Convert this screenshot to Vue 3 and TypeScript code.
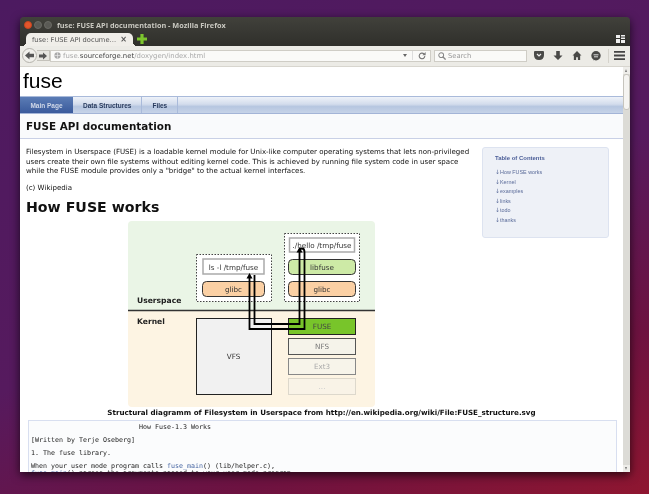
<script setup lang="ts">
const tocItems = ['How FUSE works', 'Kernel', 'examples', 'links', 'todo', 'thanks']
const navItems = ['Main Page', 'Data Structures', 'Files']
const lanes = [
  { y: 318, label: 'FUSE', fill: '#78c52a', stroke: '#222', text: '#444' },
  { y: 338, label: 'NFS', fill: '#f5f3ea', stroke: '#555', text: '#777' },
  { y: 358, label: 'Ext3', fill: '#f7f4ea', stroke: '#888', text: '#aaa' },
  { y: 378, label: '...', fill: '#f9f3e7', stroke: '#ddd8cc', text: '#ccc' },
]
const howto = [
  ' '.repeat(27) + 'How Fuse-1.3 Works',
  '',
  '[Written by Terje Oseberg]',
  '',
  '1. The fuse library.',
  '',
  '',
].join('\n')
</script>

<template>
  <div class="desktop">
    <div class="window">
      <header class="chrome">
        <div class="titlebar">
          <div class="lights">
            <span class="light close"></span>
            <span class="light"></span>
            <span class="light"></span>
          </div>
          <span class="wintitle">fuse: FUSE API documentation - Mozilla Firefox</span>
        </div>
        <div class="tabstrip">
          <div class="tab">
            <span class="tabtext">fuse: FUSE API docume…</span>
            <span class="tabclose">×</span>
          </div>
          <svg class="plus" width="10" height="10" viewBox="0 0 10 10">
            <path d="M3.4 0h3.2v3.4H10v3.2H6.6V10H3.4V6.6H0V3.4h3.4z" fill="#7cc52e" />
          </svg>
          <span class="spacer"></span>
          <svg class="grid" width="9" height="8" viewBox="0 0 9 8">
            <path d="M0 0h4v3H0zM5 0h4v1.5H5zM5 2.5h4V4H5zM0 4h4v4H0zM5 5h4v3H5z" fill="#eee" />
          </svg>
        </div>
      </header>

      <div class="toolbar">
        <div class="navbtns">
          <span class="back">
            <svg width="9" height="9" viewBox="0 0 10 10"><path d="M0 5l5-4.5V3h5v4H5v2.500z" fill="#555" /></svg>
          </span>
          <span class="forward">
            <svg width="8" height="8" viewBox="0 0 10 10"><path d="M10 5L5 .5V3H0v4h5v2.500z" fill="#555" /></svg>
          </span>
        </div>
        <div class="urlbar">
          <svg width="7" height="7" viewBox="0 0 8 8"><circle cx="4" cy="4" r="3.600" fill="#aaa" /><path d="M.5 4h7M4 .5v7" stroke="#eee" stroke-width=".7" /></svg>
          <span class="url">fuse.<b>sourceforge.net</b>/doxygen/index.html</span>
          <span class="spacer"></span>
          <span class="drop"></span>
          <span class="urlsep"></span>
          <svg width="8" height="8" viewBox="0 0 10 10"><path d="M8.500 5a3.500 3.500 0 1 1-1-2.500" fill="none" stroke="#777" stroke-width="1.400" /><path d="M9.500 0v4h-4z" fill="#777" /></svg>
        </div>
        <div class="searchbar">
          <svg width="8" height="8" viewBox="0 0 10 10"><circle cx="4" cy="4" r="3" fill="none" stroke="#888" stroke-width="1.300" /><path d="M6 6l3.500 3.500" stroke="#888" stroke-width="1.600" /></svg>
          <span>Search</span>
        </div>
        <div class="tools">
          <svg width="10" height="9" viewBox="0 0 10 9"><path d="M0 1q0-1 1-1h8q1 0 1 1v3q0 5-5 5T0 4z" fill="#4a4a48" /><path d="M3 3l2 2 2-2" fill="none" stroke="#eee" stroke-width="1.200" /></svg>
          <svg width="10" height="9" viewBox="0 0 10 10"><path d="M3 0h4v5h3l-5 5-5-5h3z" fill="#4a4a48" /></svg>
          <svg width="10" height="9" viewBox="0 0 10 10"><path d="M5 0l5 5H8.500v5H6V7H4v3H1.500V5H0z" fill="#4a4a48" /></svg>
          <svg width="10" height="10" viewBox="0 0 10 10"><circle cx="5" cy="4.700" r="4.700" fill="#4a4a48" /><path d="M2.500 9.500L3 7l2 1z" fill="#4a4a48" /><path d="M2.500 3.800h5M3 5.800h4" stroke="#eee" stroke-width=".9" /></svg>
          <span class="toolsep"></span>
          <svg class="menu" width="11" height="9" viewBox="0 0 11 9"><path d="M0 0h11v1.800H0zM0 3.600h11v1.800H0zM0 7.200h11V9H0z" fill="#444" /></svg>
        </div>
      </div>

      <div class="viewport">
        <main class="page">
          <div class="projectname">fuse</div>
          <nav class="navtabs">
            <a v-for="(item, i) in navItems" :key="item" class="navtab" :class="{ active: i === 0 }">{{ item }}</a>
          </nav>
          <div class="pagehead">FUSE API documentation</div>

          <div class="contents">
            <aside class="toc">
              <h4>Table of Contents</h4>
              <ul>
                <li v-for="item in tocItems" :key="item"><span class="arr">↓</span>{{ item }}</li>
              </ul>
            </aside>
            <p class="intro">Filesystem in Userspace (FUSE) is a loadable kernel module for Unix-like computer operating systems that lets non-privileged users create their own file systems without editing kernel code. This is achieved by running file system code in user space while the FUSE module provides only a "bridge" to the actual kernel interfaces.</p>
            <p class="cite">(c) Wikipedia</p>
            <h1>How FUSE works</h1>

            <svg class="diagram" width="247" height="186" viewBox="128 221 247 186">
              <path d="M128 311v-86q0-4 4-4h239q4 0 4 4v86z" fill="#eaf5e6" />
              <path d="M128 311h247v92q0 4-4 4H132q-4 0-4-4z" fill="#fdf4e3" />
              <line x1="128" y1="310.500" x2="375" y2="310.500" stroke="#333" stroke-width="1.500" />

              <rect x="196.500" y="254.500" width="75" height="47" fill="#fff" stroke="#444" stroke-dasharray="1.500 1.500" />
              <rect x="203" y="259" width="61" height="15" fill="#fff" stroke="#aaa" stroke-width="1.500" />
              <rect x="202.500" y="281.500" width="62" height="15" rx="4" fill="#fbd0a4" stroke="#333" />

              <rect x="284.500" y="233.500" width="75" height="68" fill="#fff" stroke="#444" stroke-dasharray="1.500 1.500" />
              <rect x="289.500" y="238" width="65" height="14" fill="#fff" stroke="#aaa" stroke-width="1.500" />
              <rect x="288.500" y="259.500" width="67" height="15" rx="4" fill="#cdeaa6" stroke="#333" />
              <rect x="288.500" y="281.500" width="67" height="15" rx="4" fill="#fbd0a4" stroke="#333" />

              <rect x="196.500" y="318.500" width="75" height="76" fill="#f1f1f1" stroke="#222" />
              <rect v-for="lane in lanes" :key="lane.label" x="288.500" :y="lane.y + 0.500" width="67" height="16" :fill="lane.fill" :stroke="lane.stroke" />

              <g class="dtext" fill="#333">
                <text x="233.500" y="269.500">ls -l /tmp/fuse</text>
                <text x="233.500" y="291.500">glibc</text>
                <text x="322" y="248">./hello /tmp/fuse</text>
                <text x="322" y="269.500">libfuse</text>
                <text x="322" y="291.500">glibc</text>
                <text x="233.500" y="359">VFS</text>
                <text v-for="lane in lanes" :key="lane.label" x="322" :y="lane.y + 11" :fill="lane.text">{{ lane.label }}</text>
              </g>
              <text class="zone" x="137" y="303">Userspace</text>
              <text class="zone" x="137" y="324">Kernel</text>

              <g fill="none" stroke="#000" stroke-width="1.800">
                <path d="M254.500 275V324H299.500V252" />
                <path d="M249.500 278V329H304.500V252q0-3.500-2.500-3.500-2.500 0-2.500 2.500" />
              </g>
              <path d="M249.500 273l-3 5.500h6zM299.500 247l-3 5.500h6z" fill="#000" />
            </svg>

            <p class="caption">Structural diagramm of Filesystem in Userspace from http://en.wikipedia.org/wiki/File:FUSE_structure.svg</p>

            <div class="fragment">
              <div>{{ howto }}</div>
              <div>When your user mode program calls <a>fuse_main</a>() (lib/helper.c),</div>
              <div><a>fuse_main</a>() parses the arguments passed to your user mode program,</div>
            </div>
          </div>
        </main>
        <div class="scrollbar">
          <span class="sbtn up"></span>
          <span class="thumb"></span>
          <span class="spacer"></span>
          <span class="sbtn down"></span>
        </div>
      </div>
    </div>
  </div>
</template>

<style>
html, body { margin: 0; overflow: hidden; }
</style>

<style scoped>
.desktop {
  width: 649px;
  height: 494px;
  box-sizing: border-box;
  padding: 17px 19px 22px 20px;
  overflow: hidden;
  background: linear-gradient(158deg, #4c1a60 0%, #561a5e 52%, #6d1240 78%, #8f1630 100%);
  filter: blur(0.35px);
}
.window {
  height: 455px;
  display: flex;
  flex-direction: column;
  border-radius: 4px 4px 0 0;
  overflow: hidden;
  box-shadow: 0 3px 10px rgba(0, 0, 0, 0.7);
  font-family: "DejaVu Sans", sans-serif;
}
.spacer { flex: 1 1 auto; }

.chrome {
  height: 29px;
  flex: none;
  background: linear-gradient(#41413b, #2f2f2b);
  display: flex;
  flex-direction: column;
}
.titlebar {
  height: 16px;
  flex: none;
  display: flex;
  align-items: center;
  padding-left: 4px;
}
.lights { display: flex; gap: 2px; width: 33px; }
.light {
  width: 8px;
  height: 8px;
  border-radius: 50%;
  background: #5a5a55;
  border: 0.5px solid #6a6a64;
  box-sizing: border-box;
}
.light.close { background: #e2562c; border-color: #c8451f; }
.wintitle {
  font-family: "Open Sans", sans-serif;
  font-size: 7.300px;
  font-weight: bold;
  color: #c9c8c0;
  white-space: nowrap;
}
.tabstrip {
  height: 13px;
  flex: none;
  display: flex;
  align-items: center;
  padding-left: 6px;
  padding-right: 5px;
}
.tab {
  width: 107px;
  height: 13px;
  box-sizing: border-box;
  background: #f0eee9;
  border-radius: 5px 5px 0 0;
  display: flex;
  align-items: center;
  justify-content: space-between;
  padding: 0 6px 0 6px;
  position: relative;
}
.tab::before,
.tab::after {
  content: "";
  position: absolute;
  bottom: 0;
  width: 4px;
  height: 4px;
}
.tab::before {
  left: -4px;
  background: radial-gradient(circle at 0 0, transparent 4px, #f0eee9 4.300px);
}
.tab::after {
  right: -4px;
  background: radial-gradient(circle at 100% 0, transparent 4px, #f0eee9 4.300px);
}
.tabtext { font-size: 6.700px; color: #555; white-space: nowrap; }
.tabclose { font-size: 8px; line-height: 8px; color: #555; font-weight: bold; }
.plus { margin-left: 4px; margin-bottom: 1px; }
.grid { margin-bottom: 1px; }

.toolbar {
  height: 21px;
  flex: none;
  box-sizing: border-box;
  background: #ecebe6;
  border-bottom: 1px solid #d8d6cf;
  display: flex;
  align-items: center;
  padding: 0 6px 1px 2px;
}
.navbtns { display: flex; align-items: center; width: 28px; flex: none; }
.back {
  width: 15px;
  height: 15px;
  flex: none;
  box-sizing: border-box;
  border-radius: 50%;
  background: #f0efeb;
  border: 1px solid #b5b3ac;
  display: flex;
  align-items: center;
  justify-content: center;
}
.forward {
  width: 13px;
  height: 11px;
  flex: none;
  display: flex;
  align-items: center;
  justify-content: center;
  background: #e6e5e0;
  border: 1px solid #c4c2bb;
  border-left: none;
  box-sizing: border-box;
}
.urlbar {
  width: 381px;
  height: 12px;
  flex: none;
  box-sizing: border-box;
  background: #fafaf8;
  border: 1px solid #cfcdc6;
  display: flex;
  align-items: center;
  gap: 2px;
  padding: 0 4px 0 3px;
}
.url { font-size: 6.900px; color: #aaa; white-space: nowrap; }
.url b { font-weight: normal; color: #444; }
.drop {
  width: 0;
  height: 0;
  border-left: 2px solid transparent;
  border-right: 2px solid transparent;
  border-top: 3px solid #666;
}
.urlsep { width: 1px; height: 9px; background: #ddd; margin: 0 3px; }
.searchbar {
  width: 93px;
  height: 12px;
  flex: none;
  box-sizing: border-box;
  margin-left: 3px;
  background: #fafaf8;
  border: 1px solid #cfcdc6;
  display: flex;
  align-items: center;
  gap: 2px;
  padding: 0 3px;
  font-size: 6.800px;
  color: #999;
}
.tools {
  flex: 1 1 auto;
  display: flex;
  align-items: center;
  gap: 9px;
  padding-left: 7px;
}
.toolsep { width: 1px; height: 14px; background: #d5d3cc; margin-left: -2px; }
.menu { margin-left: -4px; }

.viewport {
  flex: 1 1 auto;
  min-height: 0;
  display: flex;
  background: #fff;
}
.page {
  flex: 1 1 auto;
  min-width: 0;
  overflow: hidden;
  color: #222;
}
.projectname {
  height: 29px;
  box-sizing: border-box;
  padding-left: 3px;
  font-family: "Liberation Sans", sans-serif;
  font-size: 21px;
  line-height: 28px;
  color: #000;
}
.navtabs {
  height: 18px;
  box-sizing: border-box;
  display: flex;
  border-top: 1px solid #a9bada;
  border-bottom: 1px solid #a3b4d7;
  background: linear-gradient(#eef2f9 0%, #d3dcec 45%, #b6c6e0 60%, #c6d3e8 100%);
  font-family: "Liberation Sans", sans-serif;
  font-size: 6.500px;
  font-weight: bold;
  color: #283a5d;
  white-space: nowrap;
}
.navtab {
  display: flex;
  align-items: center;
  padding: 0 10px;
  border-right: 1px solid #a9bada;
}
.navtab.active {
  width: 53px;
  box-sizing: border-box;
  padding: 0;
  justify-content: center;
  color: #d0d8e8;
  border-right: none;
  background: linear-gradient(#5b7cb5, #3a5a9c);
}
.pagehead {
  height: 25px;
  box-sizing: border-box;
  padding: 5px 0 0 6px;
  background: #f9fafc;
  border-bottom: 1px solid #c9d0e6;
  font-size: 10.400px;
  font-weight: bold;
  line-height: 15px;
  color: #111;
}
.contents { padding: 8px 6px 0 6px; }
.toc {
  float: right;
  width: 127px;
  height: 91px;
  box-sizing: border-box;
  margin: 0 8px 0 6px;
  padding: 5.500px 12px;
  background: #eef1f7;
  border: 1px solid #dde3f0;
  border-radius: 3px;
  font-family: "Liberation Sans", sans-serif;
  color: #5a6b99;
}
.toc h4 {
  margin: 0 0 6.500px;
  font-size: 5.950px;
  line-height: 8px;
  color: #4a5d97;
}
.toc ul { margin: 0; padding: 0; list-style: none; font-size: 5.400px; line-height: 9.500px; }
.arr {
  display: inline-block;
  width: 5px;
  font-family: "DejaVu Sans", sans-serif;
  font-size: 6px;
  line-height: 1;
}
.intro {
  margin: 0;
  font-size: 7.050px;
  line-height: 9.700px;
  color: #111;
}
.cite { margin: 7px 0 0; font-size: 7.050px; line-height: 10px; color: #111; }
h1 {
  margin: 3px 0 0;
  font-size: 14.200px;
  line-height: 22px;
  color: #111;
}
.diagram {
  display: block;
  margin: 3px 0 0 102px;
}
.dtext text {
  font-family: "DejaVu Sans", sans-serif;
  font-size: 7.200px;
  text-anchor: middle;
}
.zone {
  font-family: "DejaVu Sans", sans-serif;
  font-size: 7.600px;
  font-weight: bold;
  fill: #222;
}
.caption {
  clear: both;
  margin: 1px 0 0;
  text-align: center;
  font-size: 7.150px;
  line-height: 10px;
  font-weight: bold;
  color: #111;
}
.fragment {
  margin: 2px 0 0 2px;
  height: 80px;
  box-sizing: border-box;
  padding: 3px 2px;
  background: #fbfcfd;
  border: 1px solid #d8dff0;
  font-family: "DejaVu Sans Mono", monospace;
  font-size: 6.650px;
  line-height: 6.500px;
  white-space: pre;
  color: #222;
}
.fragment a { color: #4665a2; }
.scrollbar {
  width: 7px;
  flex: none;
  display: flex;
  flex-direction: column;
  background: #dcdbd6;
}
.sbtn {
  height: 7px;
  flex: none;
  background: #eeede9;
  position: relative;
}
.sbtn::after {
  content: "";
  position: absolute;
  left: 2px;
  top: 2px;
  border-left: 1.500px solid transparent;
  border-right: 1.500px solid transparent;
}
.up::after { border-bottom: 3px solid #777; }
.down::after { border-top: 3px solid #777; }
.thumb {
  height: 36px;
  flex: none;
  box-sizing: border-box;
  background: #f5f4f1;
  border: 1px solid #c6c4bd;
  border-radius: 3px;
}
</style>
